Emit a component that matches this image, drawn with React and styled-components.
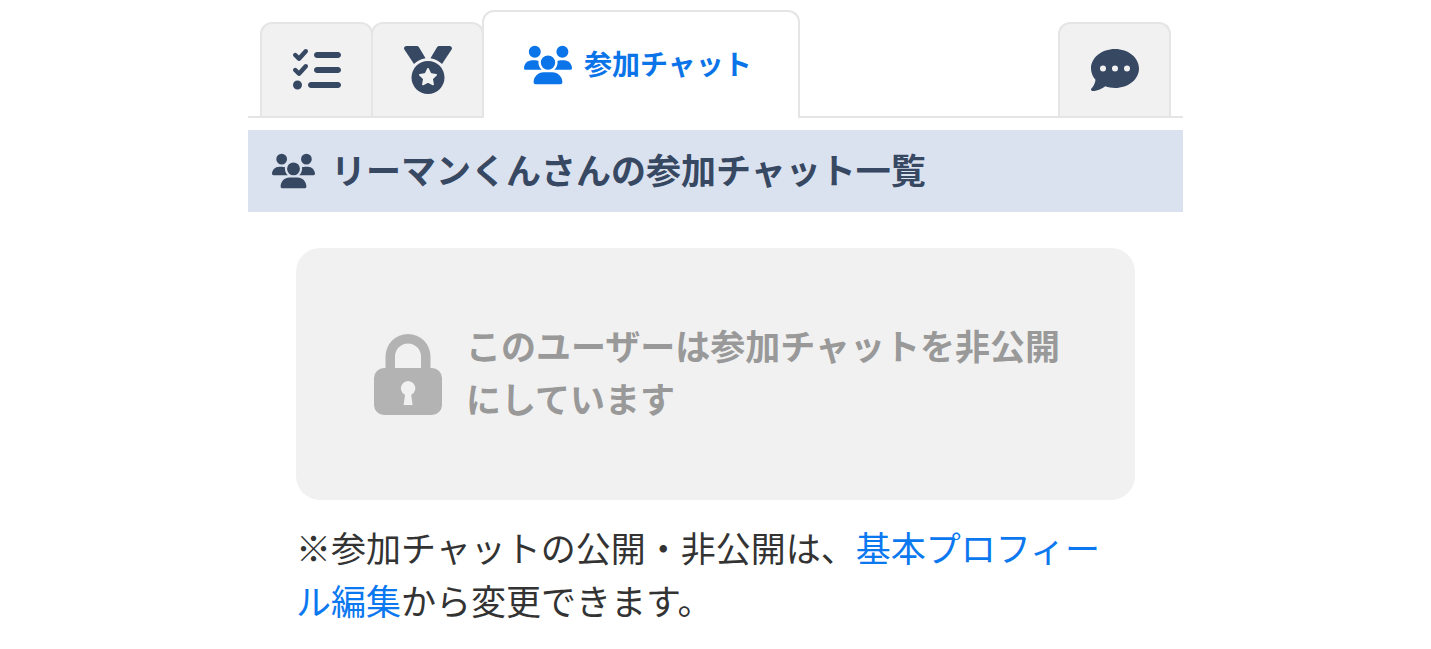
import { useState } from "react";
import styled, { createGlobalStyle } from "styled-components";
import { FaCommentDots, FaListCheck, FaMedal, FaUsers } from "react-icons/fa6";

export default function App() {
  const [active, setActive] = useState("chats");

  const tabProps = (id) => ({
    type: "button",
    role: "tab",
    "aria-selected": active === id,
    onClick: () => setActive(id),
  });

  return (
    <>
      <GlobalStyle />
      <Page>
        <TabList role="tablist">
          <Tab {...tabProps("tasks")} aria-label="タスク">
            <FaListCheck />
          </Tab>
          <Tab {...tabProps("medals")} aria-label="メダル">
            <FaMedal />
          </Tab>
          <WideTab {...tabProps("chats")}>
            <FaUsers />
            <span>参加チャット</span>
          </WideTab>
          <LastTab {...tabProps("messages")} aria-label="メッセージ">
            <FaCommentDots />
          </LastTab>
        </TabList>

        <TitleBar>
          <FaUsers />
          <h1>リーマンくんさんの参加チャット一覧</h1>
        </TitleBar>

        <Content>
          <PrivateCard>
            <LockIcon />
            <p>このユーザーは参加チャットを非公開にしています</p>
          </PrivateCard>
          <Note>
            ※参加チャットの公開・非公開は、<a href="#profile">基本プロフィール編集</a>から変更できます。
          </Note>
        </Content>
      </Page>
    </>
  );
}

const LockIcon = () => (
  <LockSvg viewBox="0 0 68 81" aria-hidden="true">
    <path
      fillRule="evenodd"
      d="M11.5 34V22.5a22.5 22.5 0 0 1 45 0V34H58a10 10 0 0 1 10 10v27a10 10 0 0 1-10 10H10A10 10 0 0 1 0 71V44a10 10 0 0 1 10-10zM21 34h26V22.5a13 13 0 0 0-26 0zM31 60.8L29.6 71h9L37.2 60.8a7.2 7.2 0 1 0-6.2 0z"
    />
  </LockSvg>
);

const GlobalStyle = createGlobalStyle`
  *, *::before, *::after {
    box-sizing: border-box;
  }

  body {
    margin: 0;
    background: #fff;
    color: #333;
    font-family: "Noto Sans CJK JP", sans-serif;
  }

  h1, p {
    margin: 0;
  }
`;

const Page = styled.main`
  width: 100%;
  max-width: 935px;
  margin: 0 auto;
  padding-top: 10px;
`;

const TabList = styled.div`
  display: flex;
  align-items: flex-end;
  padding: 0 12px;
  border-bottom: 2px solid #e5e5e5;
`;

const Tab = styled.button`
  display: flex;
  align-items: center;
  justify-content: center;
  width: 113px;
  height: 94px;
  padding: 0;
  border: 2px solid #e5e5e5;
  border-bottom: none;
  border-radius: 12px 12px 0 0;
  background: #f1f1f1;
  color: #374863;
  font-family: inherit;
  cursor: pointer;

  & + & {
    margin-left: -2px;
  }

  svg {
    width: 48px;
    height: 48px;
    flex-shrink: 0;
  }
`;

const WideTab = styled(Tab)`
  gap: 12px;
  width: auto;
  height: 108px;
  margin: 0 0 -2px -2px;
  padding: 0 46px 0 40px;
  background: #fff;
  color: #0b74e8;
  font-size: 28px;
  font-weight: 700;
  line-height: 40px;
  white-space: nowrap;

  span {
    padding-bottom: 4px;
  }
`;

const LastTab = styled(Tab)`
  && {
    margin-left: auto;
  }
`;

const TitleBar = styled.header`
  display: flex;
  align-items: center;
  gap: 16px;
  margin-top: 12px;
  padding: 14px 24px;
  background: #dbe2ef;
  color: #374863;

  svg {
    width: 43px;
    height: 36px;
    flex-shrink: 0;
  }

  h1 {
    padding-bottom: 4px;
    font-size: 35px;
    font-weight: 700;
    line-height: 50px;
  }
`;

const Content = styled.section`
  padding: 36px 48px;
`;

const PrivateCard = styled.div`
  display: flex;
  align-items: center;
  gap: 24px;
  padding: 70px 60px 70px 78px;
  border-radius: 24px;
  background: #f1f1f1;
  color: #999;

  p {
    padding-bottom: 6px;
    font-size: 35px;
    font-weight: 700;
    line-height: 53px;
  }
`;

const LockSvg = styled.svg`
  width: 68px;
  height: 81px;
  flex-shrink: 0;
  fill: #b3b3b3;
`;

const Note = styled.p`
  margin-top: 20px;
  padding-right: 12px;
  font-size: 35px;
  line-height: 53px;

  a {
    color: #0b78f0;
    text-decoration: none;
  }
`;
